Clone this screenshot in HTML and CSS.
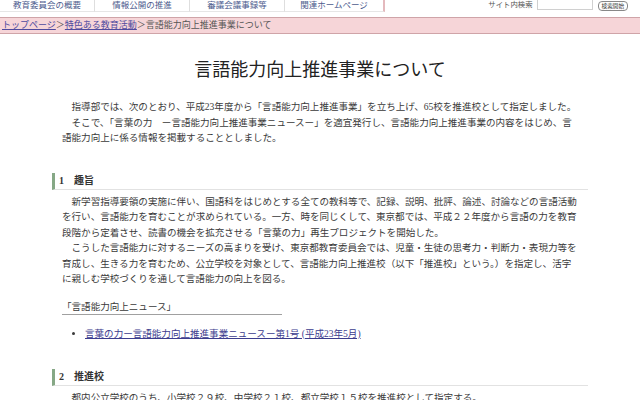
FILE: index.html
```html
<!DOCTYPE html>
<html lang="ja">
<head>
<meta charset="utf-8">
<title>言語能力向上推進事業について</title>
<link rel="stylesheet" href="styles.css">
</head>
<body>
<div class="top">
  <ul class="tabs">
    <li class="tab">教育委員会の概要</li>
    <li class="tab">情報公開の推進</li>
    <li class="tab">審議会議事録等</li>
    <li class="tab tab-last">関連ホームページ</li>
  </ul>
  <div class="search">
    <span class="search-label">サイト内検索</span>
    <span class="search-input"></span>
    <span class="search-btn">検索開始</span>
  </div>
</div>
<div class="crumb"><a href="#">トップページ</a>＞<a href="#">特色ある教育活動</a>＞言語能力向上推進事業について</div>
<div class="content">
  <h1 class="title">言語能力向上推進事業について</h1>
  <p class="text">指導部では、次のとおり、平成23年度から「言語能力向上推進事業」を立ち上げ、65校を推進校として指定しました。</p>
  <p class="text">そこで、「言葉の力　ー言語能力向上推進事業ニュースー」を適宜発行し、言語能力向上推進事業の内容をはじめ、言語能力向上に係る情報を掲載することとしました。</p>

  <h2 class="head">1　趣旨</h2>
  <p class="text">新学習指導要領の実施に伴い、国語科をはじめとする全ての教科等で、記録、説明、批評、論述、討論などの言語活動を行い、言語能力を育むことが求められている。一方、時を同じくして、東京都では、平成２２年度から言語の力を教育段階から定着させ、読書の機会を拡充させる「言葉の力」再生プロジェクトを開始した。</p>
  <p class="text">こうした言語能力に対するニーズの高まりを受け、東京都教育委員会では、児童・生徒の思考力・判断力・表現力等を育成し、生きる力を育むため、公立学校を対象として、言語能力向上推進校（以下「推進校」という。）を指定し、活字に親しむ学校づくりを通して言語能力の向上を図る。</p>

  <div class="news">「言語能力向上ニュース」</div>
  <ul class="links">
    <li><a href="#">言葉の力ー言語能力向上推進事業ニュースー第1号 (平成23年5月)</a></li>
  </ul>

  <h2 class="head head2">2　推進校</h2>
  <p class="text">都内公立学校のうち、小学校２９校、中学校２１校、都立学校１５校を推進校として指定する。</p>
</div>
</body>
</html>
```
FILE: styles.css
```css
html, body {
  margin: 0;
  padding: 0;
  background: #ffffff;
}
body {
  font-family: "Liberation Serif", "Noto Sans CJK JP", serif;
  color: #3a3a3a;
  font-size: 9.55px;
  overflow: hidden;
  width: 640px;
  height: 400px;
}
.top {
  height: 17px;
  display: flex;
  align-items: flex-start;
}
.tabs {
  list-style: none;
  margin: 0;
  padding: 0;
  display: flex;
  height: 12px;
}
.tab {
  width: 95px;
  height: 12px;
  line-height: 10px;
  text-align: center;
  font-size: 8.5px;
  color: #4d5c8e;
  border-right: 1px solid #dedede;
  border-bottom: 1px solid #e6e6e6;
  box-sizing: border-box;
}
.tab-last {
  width: 100px;
  border-right: 2px solid #e4b9bd;
}
.search {
  margin-left: auto;
  display: flex;
  align-items: flex-start;
  padding-right: 12px;
}
.search-label {
  font-size: 7.4px;
  line-height: 10px;
  color: #555555;
  margin-right: 4px;
}
.search-input {
  width: 54px;
  height: 9px;
  border: 1px solid #d0d0d0;
  border-top: none;
  background: #ffffff;
  margin-right: 5px;
}
.search-btn {
  font-size: 5.6px;
  line-height: 8px;
  height: 8px;
  padding: 0 3px;
  border: 1px solid #888888;
  border-radius: 4px;
  color: #333333;
  margin-top: 1px;
}
.crumb {
  height: 15px;
  line-height: 15px;
  background: #f6d5d8;
  border-top: 1px solid #cfa4a8;
  border-bottom: 1px solid #cfa4a8;
  font-size: 9px;
  color: #555555;
  padding-left: 2px;
  white-space: nowrap;
}
.crumb a {
  color: #4f4a9e;
}
.content {
  margin: 0 52px;
  width: 536px;
}
.title {
  margin: 22px 0 0;
  font-family: "Noto Sans CJK JP", sans-serif;
  font-weight: 400;
  font-size: 18px;
  line-height: 24px;
  text-align: center;
  color: #222222;
}
.title + .text {
  margin-top: 19px;
}
.text {
  margin: 0;
  padding: 0 8px 0 10px;
  width: 518px;
  line-height: 15.5px;
  text-indent: 1em;
}
.head {
  margin: 27px 0 0;
  height: 16px;
  line-height: 16px;
  font-size: 10px;
  font-weight: bold;
  color: #333333;
  border-left: 3px solid #86a886;
  border-bottom: 1px solid #e2e2e2;
  padding-left: 4px;
}
.head + .text {
  margin-top: 4px;
}
.head2 {
  margin-top: 28px;
}
.news {
  margin: 12px 0 0 10px;
  width: 220px;
  line-height: 15px;
  border-bottom: 1px solid #a0a0a0;
}
.links {
  margin: 11px 0 0;
  padding: 0 0 0 33px;
  line-height: 15px;
}
.links li {
  list-style: disc;
}
.links a {
  color: #3c3c8e;
}
```
